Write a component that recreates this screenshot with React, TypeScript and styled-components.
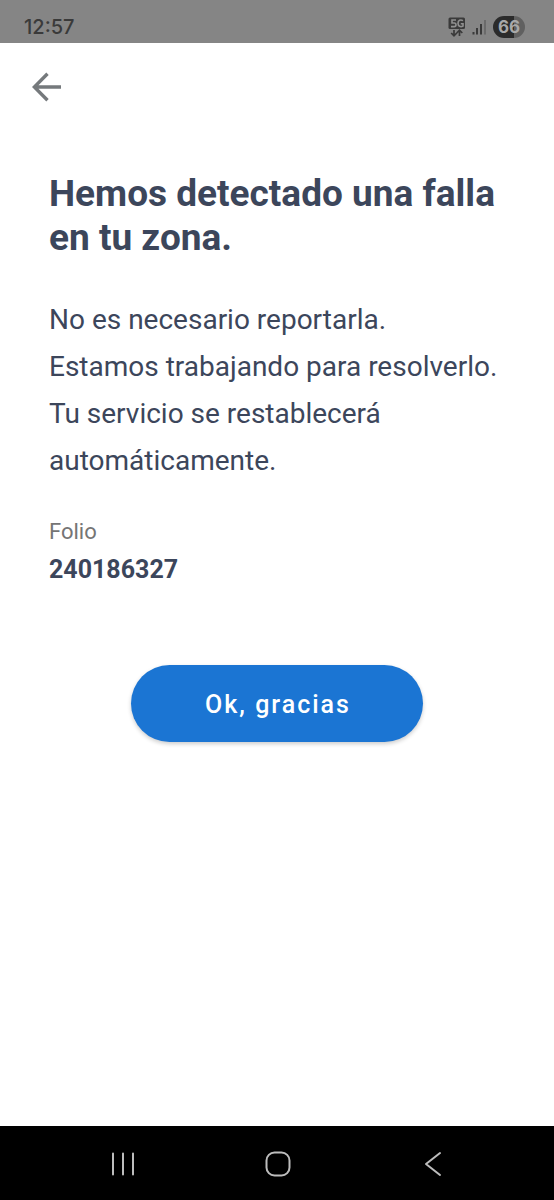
import React from "react";
import styled, { createGlobalStyle } from "styled-components";

const GlobalStyle = createGlobalStyle`
  *, *::before, *::after { box-sizing: border-box; }
  body {
    margin: 0;
    background: #ffffff;
    font-family: Roboto, "Liberation Sans", sans-serif;
    color: #3c465b;
  }
`;

const Screen = styled.div`
  display: flex;
  flex-direction: column;
  min-height: 100vh;
  background: #ffffff;
`;

const StatusBar = styled.header`
  display: flex;
  align-items: center;
  justify-content: space-between;
  height: 43px;
  padding: 10px 29px 0 24px;
  background: #858585;
  color: #3a3a3a;
`;

const Clock = styled.time`
  font-family: Inter, Roboto, sans-serif;
  font-size: 20px;
  line-height: 24px;
  font-weight: 500;
`;

const StatusIcons = styled.div`
  display: flex;
  align-items: center;
  gap: 6px;
`;

const Battery = styled.span`
  width: 32px;
  height: 22px;
  border-radius: 11px;
  background: linear-gradient(to right, #2b2b2b 66%, #606060 66%);
  color: #a8a8a8;
  font-family: Inter, Roboto, sans-serif;
  font-size: 17px;
  line-height: 22px;
  font-weight: 700;
  text-align: center;
`;

const IconButton = styled.button`
  display: flex;
  align-items: center;
  justify-content: center;
  padding: 8px;
  border: 0;
  background: transparent;
  color: inherit;
  cursor: pointer;
`;

const TopBar = styled.nav`
  display: flex;
  align-items: center;
  height: 88px;
  padding: 0 24px;
  color: #75797c;
`;

const Content = styled.main`
  flex: 1;
  display: flex;
  flex-direction: column;
  padding: 41px 49px;
`;

const Title = styled.h1`
  margin: 0 0 36px;
  font-size: 37px;
  line-height: 44px;
  font-weight: 700;
`;

const Message = styled.p`
  margin: 0;
  font-size: 28px;
  line-height: 47px;
`;

const Folio = styled.dl`
  margin: 32px 0 0;
`;

const FolioLabel = styled.dt`
  font-size: 22px;
  line-height: 32px;
  color: #757575;
`;

const FolioValue = styled.dd`
  margin: 4px 0 0;
  font-size: 25px;
  line-height: 36px;
  font-weight: 700;
`;

const PrimaryButton = styled.button`
  align-self: center;
  min-width: 292px;
  height: 77px;
  margin-top: 77px;
  padding: 2px 72px 0 74px;
  border: 0;
  border-radius: 39px;
  background: #1b75d3;
  box-shadow: 0 2px 4px rgba(0, 0, 0, 0.2);
  color: #ffffff;
  font-family: inherit;
  font-size: 25px;
  font-weight: 500;
  letter-spacing: 2px;
  cursor: pointer;
`;

const NavigationBar = styled.nav`
  display: grid;
  grid-template-columns: repeat(3, 1fr);
  justify-items: center;
  align-items: center;
  height: 74px;
  padding: 2px 44px 0 46px;
  background: #000000;
  color: #bdbdbd;
`;

const NetworkIcon = () => (
  <svg width="18" height="20" viewBox="0 0 18 20" aria-hidden="true">
    <rect x="0.5" y="0.5" width="16.5" height="11.5" rx="1.5" fill="#3a3a3a" />
    <g fill="none" stroke="#909090" strokeWidth="1.6">
      <path d="M8 3H4v3h2.200a1.700 1.700 0 0 1 0 3.600H3" />
      <path d="M15 3.600c-2.600-1.300-5-.3-5 2.700s2.600 4 5 2.800V6.800H12.800" />
    </g>
    <g fill="none" stroke="#3a3a3a" strokeWidth="1.7">
      <path d="M6 13v5.500M3.200 16 6 18.800 8.800 16" />
      <path d="M11.500 19v-5.500M8.700 16l2.800-2.800L14.300 16" />
    </g>
  </svg>
);

const SignalIcon = () => (
  <svg width="15" height="16" viewBox="0 0 15 16" aria-hidden="true">
    <g fill="#3a3a3a">
      <rect x="0.5" y="13" width="2" height="2.5" />
      <rect x="4" y="9" width="2" height="6.5" />
      <rect x="8" y="5" width="2" height="10.5" />
    </g>
    <rect x="12" y="1" width="2" height="14.5" fill="#6b6b6b" />
  </svg>
);

const ArrowLeftIcon = () => (
  <svg width="30" height="30" viewBox="0 0 30 30" fill="none" stroke="currentColor" strokeWidth="3.4" aria-hidden="true">
    <path d="M29 15H3M15.500 1.800 2.300 15l13.200 13.200" />
  </svg>
);

const RecentsIcon = () => (
  <svg width="26" height="26" viewBox="0 0 26 26" stroke="currentColor" strokeWidth="2" strokeLinecap="round" aria-hidden="true">
    <path d="M3 2.500v21M13 2.500v21M23 2.500v21" />
  </svg>
);

const HomeIcon = () => (
  <svg width="26" height="26" viewBox="0 0 26 26" fill="none" stroke="currentColor" strokeWidth="2" aria-hidden="true">
    <rect x="1.500" y="1.500" width="23" height="23" rx="8" />
  </svg>
);

const BackIcon = () => (
  <svg width="26" height="26" viewBox="0 0 26 26" fill="none" stroke="currentColor" strokeWidth="2" strokeLinecap="round" strokeLinejoin="round" aria-hidden="true">
    <path d="M20 2 6 13l14 11" />
  </svg>
);

export default function App() {
  return (
    <Screen>
      <GlobalStyle />
      <StatusBar>
        <Clock>12:57</Clock>
        <StatusIcons>
          <NetworkIcon />
          <SignalIcon />
          <Battery>66</Battery>
        </StatusIcons>
      </StatusBar>
      <TopBar>
        <IconButton type="button" aria-label="Regresar">
          <ArrowLeftIcon />
        </IconButton>
      </TopBar>
      <Content>
        <Title>Hemos detectado una falla en tu zona.</Title>
        <Message>
          No es necesario reportarla.
          <br />
          Estamos trabajando para resolverlo. Tu servicio se restablecerá automáticamente.
        </Message>
        <Folio>
          <FolioLabel>Folio</FolioLabel>
          <FolioValue>240186327</FolioValue>
        </Folio>
        <PrimaryButton type="button">Ok, gracias</PrimaryButton>
      </Content>
      <NavigationBar>
        <IconButton type="button" aria-label="Recientes">
          <RecentsIcon />
        </IconButton>
        <IconButton type="button" aria-label="Inicio">
          <HomeIcon />
        </IconButton>
        <IconButton type="button" aria-label="Atrás">
          <BackIcon />
        </IconButton>
      </NavigationBar>
    </Screen>
  );
}
